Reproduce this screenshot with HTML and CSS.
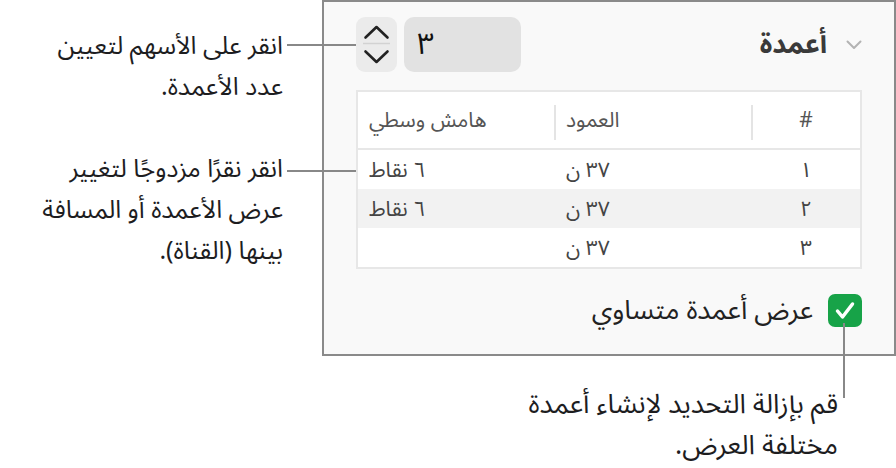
FILE: index.html
```html
<!DOCTYPE html>
<html lang="ar">
  <head>
    <meta charset="utf-8" />
    <title>أعمدة</title>
    <link rel="stylesheet" href="styles.css">
  </head>
  <body>
    <div class="figure">
      <div class="notes">
        <div class="note note-stepper">
          <p class="note-text" dir="rtl">انقر على الأسهم لتعيين<br>عدد الأعمدة.</p>
          <span class="leader"></span>
        </div>
        <div class="note note-table">
          <p class="note-text" dir="rtl">انقر نقرًا مزدوجًا لتغيير<br>عرض الأعمدة أو المسافة<br>بينها (القناة).</p>
          <span class="leader"></span>
        </div>
      </div>

      <div class="panel" dir="rtl">
        <div class="panel-head">
          <div class="title">
            <svg class="disclosure" width="16" height="10" viewBox="0 0 16 10"><polyline points="1.5,1.5 8,8 14.5,1.5" /></svg>
            <span>أعمدة</span>
          </div>
          <div class="count">
            <div class="count-field">٣</div>
            <div class="stepper">
              <svg width="41" height="55" viewBox="0 0 41 55">
                <polyline class="arrow" points="9.5,20.5 20.5,10 31.5,20.5" />
                <line class="split" x1="7" y1="26.5" x2="34" y2="26.5" />
                <polyline class="arrow" points="9.5,34.5 20.5,45 31.5,34.5" />
              </svg>
            </div>
          </div>
        </div>

        <table class="cols">
          <thead>
            <tr><th class="num">#</th><th class="col">العمود</th><th>هامش وسطي</th></tr>
          </thead>
          <tbody>
            <tr><td class="num">١</td><td>٣٧ ن</td><td>٦ نقاط</td></tr>
            <tr><td class="num">٢</td><td>٣٧ ن</td><td>٦ نقاط</td></tr>
            <tr><td class="num">٣</td><td>٣٧ ن</td><td></td></tr>
          </tbody>
        </table>

        <label class="equal">
          <span class="check">
            <svg width="34" height="33" viewBox="0 0 34 33"><polyline points="9.5,17 14.5,23 24.5,10" /></svg>
          </span>
          <span>عرض أعمدة متساوي</span>
        </label>
      </div>

      <div class="note-check" dir="rtl">
        <p class="note-text">قم بإزالة التحديد لإنشاء أعمدة<br>مختلفة العرض.</p>
      </div>
    </div>
  </body>
</html>
```

FILE: styles.css
```css
*,:after,:before{box-sizing:border-box}
body{
  margin:0;
  background:#fff;
  color:#1d1d1f;
  font:400 25px/41px "Noto Sans Arabic","Noto Sans","DejaVu Sans",sans-serif;
}

.figure{
  width:896px;
  height:468px;
  overflow:hidden;
  display:grid;
  grid-template-columns:322px 574px;
  grid-template-rows:356px auto;
}

/* callouts on the left, with leader lines running into the panel */
.notes{
  display:flex;
  flex-direction:column;
  gap:41px;
  padding-top:26px;
}
.note{
  display:flex;
  position:relative;
  z-index:1;
}
.note-text{
  margin:0;
  text-align:right;
}
.note .note-text{
  flex:none;
  width:283px;
}
.leader{
  flex:none;
  width:69px;
  height:2px;
  margin:18px -34px 0 4px;
  background:#888;
}
.note-table .leader{margin-top:21px}

/* inspector panel */
.panel{
  border:2px solid #8a8a8a;
  background:#f9f9f9;
  padding:15px 32px 0;
}
.panel-head{
  display:flex;
  justify-content:space-between;
  align-items:center;
  height:55px;
}
.title{
  display:flex;
  align-items:center;
  gap:19px;
  font-size:27px;
  font-weight:700;
  color:#3a3a3a;
}
.disclosure polyline{
  fill:none;
  stroke:#b3b3b3;
  stroke-width:2;
  stroke-linecap:round;
  stroke-linejoin:round;
}
.count{
  display:flex;
  gap:7px;
}
.count-field{
  width:117px;
  height:55px;
  border-radius:10px;
  background:#e2e2e2;
  padding-left:13px;
  text-align:left;
  font-size:30px;
  line-height:55px;
  color:#111;
}
.stepper{
  width:41px;
  height:55px;
  border-radius:9px;
  background:#ebebeb;
}
.stepper svg{display:block}
.stepper .arrow{
  fill:none;
  stroke:#222;
  stroke-width:2.6;
  stroke-linecap:round;
  stroke-linejoin:round;
}
.stepper .split{
  stroke:#d2d2d2;
  stroke-width:1.5;
}

/* columns table */
.cols{
  width:100%;
  margin-top:18px;
  border:2px solid #e7e7e7;
  border-spacing:0;
  background:#fff;
  font-size:21px;
  line-height:26px;
  color:#444;
}
.cols th,
.cols td{
  padding:0 11px;
  text-align:left;
  font-weight:400;
}
.cols th{
  height:58px;
  color:#555;
  border-bottom:2px solid #e7e7e7;
  position:relative;
}
.cols th:not(.num):before{
  content:'';
  position:absolute;
  right:-1px;
  top:13px;
  bottom:8px;
  width:2px;
  background:#e4e4e4;
}
.cols td{height:39px}
.cols tbody tr:nth-child(2) td{background:#f2f2f2}
.cols .num{
  width:108px;
  text-align:center;
}
.cols .col{width:197px}

.equal{
  display:flex;
  align-items:center;
  gap:15px;
  margin-top:21px;
  font-size:27px;
  color:#222;
}
.check{
  width:34px;
  height:33px;
  border-radius:7px;
  background:#17a348;
}
.check svg{display:block}
.check polyline{
  fill:none;
  stroke:#fff;
  stroke-width:3.5;
  stroke-linecap:round;
  stroke-linejoin:round;
}

/* callout under the panel */
.note-check{
  grid-column:2;
  position:relative;
  margin-top:28px;
  padding-right:58px;
  font-size:27px;
}
.note-check:before{
  content:'';
  position:absolute;
  right:51px;
  top:-61px;
  width:2px;
  height:75px;
  background:#888;
}
```
